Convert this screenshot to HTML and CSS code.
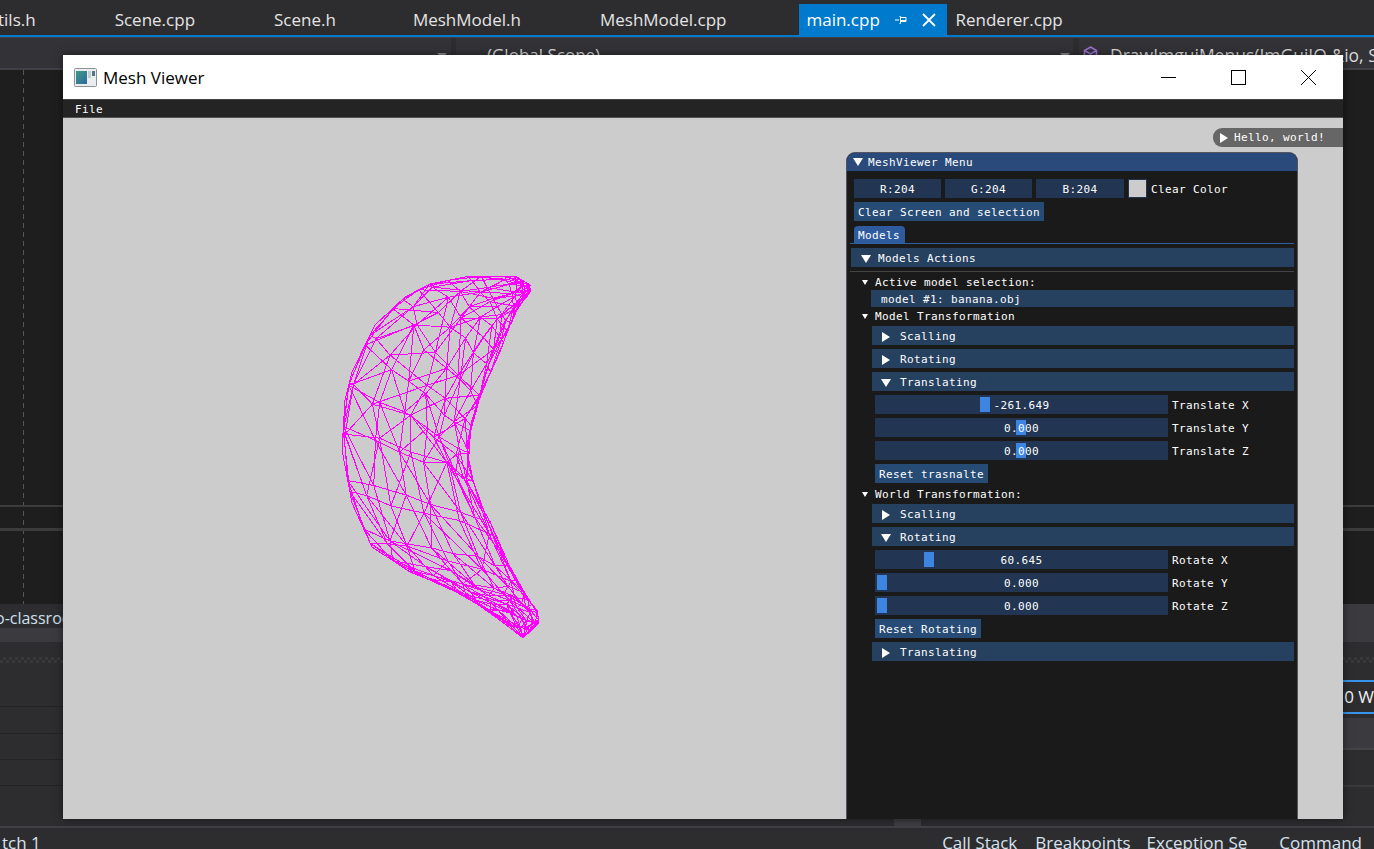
FILE: index.html
```html
<!DOCTYPE html>
<html lang="en">
<head>
    <meta charset="UTF-8">
    <meta name="viewport" content="width=device-width, initial-scale=1.0">
    <title>Mesh Viewer</title>
    <link rel="stylesheet" href="styles.css">
</head>
<body>
    <!-- IDE behind the window -->
    <div class="ide">
        <div class="tabbar">
            <span class="tab first">tils.h</span>
            <span class="tab">Scene.cpp</span>
            <span class="tab">Scene.h</span>
            <span class="tab wide">MeshModel.h</span>
            <span class="tab">MeshModel.cpp</span>
            <span class="tab active">
                main.cpp
                <svg class="pin" width="12" height="10" viewBox="0 0 12 10"><path d="M0 5h4M4.500 1.500h1v7h-1M5 2.500h6v4H5M5 5.500h6" fill="none" stroke="#fff"/></svg>
                <svg class="tab-close" width="14" height="14" viewBox="0 0 14 14"><path d="M1 1l12 12M13 1L1 13" stroke="#fff" stroke-width="1.800"/></svg>
            </span>
            <span class="tab next">Renderer.cpp</span>
        </div>
        <div class="accent"></div>
        <div class="navbar">
            <div class="nav-seg nav-left"><span class="drop"></span></div>
            <div class="nav-seg nav-mid"><span>(Global Scope)</span><span class="drop"></span></div>
            <div class="nav-seg nav-right">
                <svg width="15" height="16" viewBox="0 0 15 16"><path d="M7.500 1l6 3.500v7l-6 3.500-6-3.500v-7zM1.500 4.500l6 3.500 6-3.500M7.500 8v7" fill="#3a2f55" stroke="#9a73c9" stroke-width="1.500"/></svg>
                <span>DrawImguiMenus(ImGuiIO &amp;io, S</span>
            </div>
        </div>
        <div class="editor">
            <div class="editor-main"></div>
            <div class="editor-line"></div>
            <div class="editor-gap"></div>
            <div class="editor-line thick"></div>
            <div class="editor-tail"></div>
        </div>
        <div class="lower">
            <div class="lower-left">
                <div class="panel-tab"><span>o-classroom</span></div>
                <div class="panel-band"></div>
                <div class="dotted"></div>
                <div class="grid-row tall"></div>
                <div class="grid-row tall"></div>
                <div class="grid-row"></div>
                <div class="grid-row"></div>
                <div class="lower-fill"><span class="thumb"></span></div>
            </div>
            <div class="lower-right">
                <div class="panel-band tall"></div>
                <div class="dotted"></div>
                <div class="search-box"><span>0 W</span></div>
                <div class="panel-band mid"></div>
                <div class="grid-row r2"></div>
                <div class="lower-fill"></div>
            </div>
        </div>
        <div class="bottom-tabs">
            <span class="btab">tch 1</span>
            <span class="btab-group">
                <span class="btab">Call Stack</span>
                <span class="btab">Breakpoints</span>
                <span class="btab exc">Exception Se</span>
                <span class="btab cmd">Command</span>
            </span>
        </div>
    </div>

    <!-- Mesh Viewer window -->
    <div class="window">
        <div class="titlebar">
            <svg class="app-icon" width="23" height="19" viewBox="0 0 23 19">
                <defs>
                    <linearGradient id="appFill" x1="0" y1="0" x2="1" y2="1">
                        <stop offset="0" stop-color="#3f9a8a"/>
                        <stop offset="1" stop-color="#2c6a9c"/>
                    </linearGradient>
                </defs>
                <rect x="0.500" y="0.500" width="22" height="18" rx="1" fill="#e9edef" stroke="#8b9296"/>
                <rect x="2" y="3" width="11" height="13" fill="url(#appFill)"/>
                <rect x="14" y="3" width="3" height="7" fill="#c4ccd0"/>
                <rect x="18" y="3" width="3" height="5" fill="#55758a"/>
            </svg>
            <span class="title">Mesh Viewer</span>
            <div class="controls">
                <span class="ctl"><svg width="15" height="15" viewBox="0 0 15 15"><path d="M0 7.500h15" stroke="#000"/></svg></span>
                <span class="ctl"><svg width="15" height="15" viewBox="0 0 15 15"><rect x="0.500" y="0.500" width="14" height="14" fill="none" stroke="#000"/></svg></span>
                <span class="ctl"><svg width="15" height="15" viewBox="0 0 15 15"><path d="M0 0l15 15M15 0L0 15" stroke="#000"/></svg></span>
            </div>
        </div>
        <div class="menubar"><span>File</span></div>
        <div class="canvas">
            <svg class="mesh" id="mesh" width="1280" height="701" viewBox="63 118 1280 701"></svg>

            <div class="hello"><span class="arrow right"></span><span>Hello, world!</span></div>

            <div class="menu">
                <div class="menu-title"><span class="arrow down"></span><span>MeshViewer Menu</span></div>
                <div class="menu-body">
                    <div class="color-row">
                        <span class="frame rgb">R:204</span>
                        <span class="frame rgb">G:204</span>
                        <span class="frame rgb last">B:204</span>
                        <span class="swatch"></span>
                        <span>Clear Color</span>
                    </div>
                    <div class="btn-row"><span class="btn">Clear Screen and selection</span></div>
                    <div class="tabs"><span class="im-tab">Models</span></div>
                    <div class="header top"><span class="arrow down"></span><span>Models Actions</span></div>
                    <div class="separator"></div>
                    <div class="tree first-tree"><span class="arrow small"></span><span>Active model selection:</span></div>
                    <div class="selected">model #1: banana.obj</div>
                    <div class="tree"><span class="arrow small"></span><span>Model Transformation</span></div>

                    <div class="header sub"><span class="arrow right"></span><span>Scalling</span></div>
                    <div class="header sub"><span class="arrow right"></span><span>Rotating</span></div>
                    <div class="header sub"><span class="arrow down"></span><span>Translating</span></div>
                    <div class="slider-row">
                        <div class="slider"><span class="grab" style="left:105px"></span><span class="val">-261.649</span></div>
                        <span>Translate X</span>
                    </div>
                    <div class="slider-row">
                        <div class="slider"><span class="grab" style="left:141px"></span><span class="val">0.000</span></div>
                        <span>Translate Y</span>
                    </div>
                    <div class="slider-row">
                        <div class="slider"><span class="grab" style="left:141px"></span><span class="val">0.000</span></div>
                        <span>Translate Z</span>
                    </div>
                    <div class="btn-row sub"><span class="btn">Reset trasnalte</span></div>

                    <div class="tree world"><span class="arrow small"></span><span>World Transformation:</span></div>
                    <div class="header sub"><span class="arrow right"></span><span>Scalling</span></div>
                    <div class="header sub"><span class="arrow down"></span><span>Rotating</span></div>
                    <div class="slider-row">
                        <div class="slider"><span class="grab" style="left:49px"></span><span class="val">60.645</span></div>
                        <span>Rotate X</span>
                    </div>
                    <div class="slider-row">
                        <div class="slider"><span class="grab" style="left:2px"></span><span class="val">0.000</span></div>
                        <span>Rotate Y</span>
                    </div>
                    <div class="slider-row">
                        <div class="slider"><span class="grab" style="left:2px"></span><span class="val">0.000</span></div>
                        <span>Rotate Z</span>
                    </div>
                    <div class="btn-row sub"><span class="btn">Reset Rotating</span></div>
                    <div class="header sub"><span class="arrow right"></span><span>Translating</span></div>
                </div>
            </div>
        </div>
    </div>

    <script src="mesh.js"></script>
</body>
</html>
```

FILE: styles.css
```css
* {
    box-sizing: border-box;
}
html, body {
    margin: 0;
    height: 100%;
    overflow: hidden;
}
body {
    background-color: #1e1e1e;
    font-family: "Open Sans", "Noto Sans", sans-serif;
    position: relative;
}

/* IDE */
.ide {
    display: flex;
    flex-direction: column;
    height: 849px;
    color: #e8e8e8;
    font-size: 17px;
}
.tabbar {
    display: flex;
    align-items: flex-end;
    height: 35px;
    background-color: #2d2d30;
    white-space: nowrap;
}
.tab {
    margin-left: 79px;
    line-height: 31px;
    height: 31px;
    color: #e4e4e4;
}
.tab.first {
    margin-left: -2px;
}
.tab.wide {
    margin-left: 77px;
}
.tab.active {
    display: flex;
    align-items: center;
    width: 148px;
    margin-left: 73px;
    padding-left: 7px;
    background-color: #007acc;
    color: #fff;
}
.tab.next {
    margin-left: 8px;
}
.pin {
    margin-left: 15px;
}
.tab-close {
    margin-left: 15px;
}
.accent {
    height: 3px;
    background-color: #007acc;
    border-bottom: 1px solid #3f3f46;
}
.navbar {
    display: flex;
    height: 32px;
    background-color: #333337;
    border-bottom: 2px solid #3f3f46;
    font-size: 17px;
    color: #d8d8d8;
}
.nav-seg {
    display: flex;
    align-items: flex-start;
    padding-top: 5px;
    position: relative;
}
.nav-left {
    width: 456px;
    justify-content: flex-end;
    padding-right: 4px;
    border-right: 5px solid #2d2d30;
}
.nav-mid {
    width: 623px;
    padding-left: 31px;
    justify-content: space-between;
    padding-right: 3px;
    border-right: 6px solid #2d2d30;
}
.nav-right {
    flex: 1;
    padding-left: 4px;
    gap: 12px;
    font-size: 17.500px;
    white-space: nowrap;
    overflow: hidden;
}
.nav-right svg {
    flex: none;
    margin-top: 3px;
}
.drop {
    margin-top: 10px;
    border-left: 5px solid transparent;
    border-right: 5px solid transparent;
    border-top: 5px solid #8a8a8a;
}
.editor {
    display: flex;
    flex-direction: column;
    height: 534px;
    background-color: #1e1e1e;
    background-image: repeating-linear-gradient(to bottom, #555 0 5px, transparent 5px 9px);
    background-size: 1px 100%;
    background-position: 23px 0;
    background-repeat: no-repeat;
}
.editor-main {
    height: 435px;
}
.editor-line {
    height: 2px;
    background-color: #3c3c3c;
}
.editor-line.thick {
    height: 3px;
}
.editor-gap {
    height: 21px;
}
.editor-tail {
    flex: 1;
}
.lower {
    display: flex;
    height: 222px;
    background-color: #2d2d30;
}
.lower-left {
    display: flex;
    flex-direction: column;
    width: 932px;
}
.lower-right {
    display: flex;
    flex-direction: column;
    flex: 1;
}
.panel-tab {
    height: 24px;
    padding-top: 2px;
    font-size: 16px;
    line-height: 24px;
    color: #cfe0ee;
    white-space: nowrap;
    overflow: hidden;
    background-color: #2d2d30;
}
.panel-tab span {
    margin-left: -5px;
}
.panel-band {
    height: 14px;
    background-color: #3b3b3f;
}
.panel-band.tall {
    height: 38px;
}
.panel-band.mid {
    height: 32px;
    margin-top: 4px;
    border-bottom: 2px solid #444;
}
.dotted {
    height: 38px;
    background-color: #2d2d30;
    background-image: repeating-conic-gradient(#38383b 0 25%, transparent 0 50%);
    background-size: 6px 6px;
    background-position: 0 15px;
    background-repeat: repeat-x;
}
.grid-row {
    height: 26px;
    border-bottom: 1px solid #232325;
}
.grid-row.tall {
    height: 27px;
}
.grid-row.r2 {
    height: 37px;
    border-bottom: 2px solid #3a3a3d;
}
.lower-fill {
    flex: 1;
    position: relative;
    background-color: #2d2d30;
}
.thumb {
    position: absolute;
    right: 10px;
    bottom: 0;
    width: 27px;
    height: 7px;
    background-color: #3e3e42;
}
.search-box {
    height: 34px;
    padding-left: 413px;
    border-top: 2px solid #3794ea;
    border-bottom: 2px solid #3794ea;
    line-height: 30px;
    color: #f0f0f0;
    white-space: nowrap;
    overflow: hidden;
}
.bottom-tabs {
    display: flex;
    justify-content: space-between;
    height: 23px;
    padding: 3px 12px 0 0;
    background-color: #2d2d30;
    border-top: 2px solid #3f3f46;
    line-height: 24px;
    font-size: 17px;
    color: #d6e2ec;
    white-space: nowrap;
    overflow: hidden;
}
.btab-group {
    display: flex;
    gap: 18px;
}
.bottom-tabs > .btab {
    margin-left: 2px;
}
.btab.exc {
    margin-left: -2px;
}
.btab.cmd {
    margin-left: 14px;
}

/* Mesh Viewer window */
.window {
    position: absolute;
    left: 63px;
    top: 55px;
    width: 1280px;
    height: 764px;
    display: flex;
    flex-direction: column;
    box-shadow: 0 0 8px rgba(0, 0, 0, 0.5);
    overflow: hidden;
}
.titlebar {
    display: flex;
    align-items: center;
    height: 44px;
    flex: none;
    padding-left: 11px;
    background-color: #ffffff;
    color: #000;
    font-size: 17px;
}
.app-icon {
    margin-right: 6px;
}
.controls {
    display: flex;
    margin-left: auto;
}
.ctl {
    display: flex;
    align-items: center;
    justify-content: center;
    width: 70px;
    height: 44px;
}
.menubar,
.canvas {
    font-family: "DejaVu Sans Mono", "Liberation Mono", monospace;
    font-size: 11px;
    letter-spacing: 0.38px;
    color: #fff;
    white-space: nowrap;
}
.menubar {
    flex: none;
    height: 19px;
    padding-left: 12px;
    line-height: 19px;
    background-color: #242424;
    border-top: 1px solid #444;
    border-bottom: 1px solid #555;
}
.canvas {
    position: relative;
    flex: 1;
    background-color: #cccccc;
}
.mesh {
    position: absolute;
    left: 0;
    top: 0;
}
.hello {
    position: absolute;
    left: 1150px;
    top: 10px;
    display: flex;
    align-items: center;
    gap: 6px;
    width: 140px;
    height: 19px;
    padding-left: 7px;
    background-color: #666666;
    border-radius: 9px 0 0 9px;
}

/* imgui triangles */
.arrow {
    display: inline-block;
    flex: none;
}
.arrow.right {
    border-top: 5px solid transparent;
    border-bottom: 5px solid transparent;
    border-left: 8px solid #fff;
}
.arrow.down {
    border-left: 5px solid transparent;
    border-right: 5px solid transparent;
    border-top: 8px solid #fff;
}
.arrow.small {
    border-left: 3px solid transparent;
    border-right: 3px solid transparent;
    border-top: 5px solid #fff;
}

/* imgui menu */
.menu {
    position: absolute;
    left: 783px;
    top: 34px;
    width: 452px;
    height: 700px;
    background-color: #1a1a1a;
    border: 1px solid #55555f;
    border-bottom: none;
    border-radius: 9px 9px 0 0;
}
.menu-title {
    display: flex;
    align-items: center;
    gap: 5px;
    height: 18px;
    padding-left: 6px;
    background-color: #294a7a;
    border-radius: 8px 8px 0 0;
}
.menu-body {
    display: flex;
    flex-direction: column;
    padding: 8px 3px 0 7px;
}
.color-row {
    display: flex;
    gap: 4px;
    height: 19px;
    line-height: 21px;
}
.frame {
    background-color: #223552;
}
.rgb {
    width: 87px;
    height: 19px;
    text-align: center;
}
.rgb.last {
    width: 88px;
}
.swatch {
    width: 19px;
    height: 19px;
    background-color: #cccccc;
    border: 1px solid #24344e;
}
.btn-row {
    display: flex;
    height: 19px;
    margin-top: 4px;
}
.btn-row.sub {
    margin-left: 21px;
}
.btn {
    padding: 0 4px;
    line-height: 21px;
    background-color: #264b74;
}
.tabs {
    display: flex;
    height: 18px;
    margin: 5px 0 0 -4px;
    padding-left: 4px;
    border-bottom: 1px solid #2f5f9f;
}
.im-tab {
    width: 51px;
    height: 17px;
    padding-left: 4px;
    line-height: 19px;
    background-color: #2d5b9e;
    border-radius: 4px 4px 0 0;
}
.header {
    display: flex;
    align-items: center;
    height: 19px;
    margin-top: 4px;
    padding-top: 2px;
    background-color: #26405f;
}
.header.top {
    margin-left: -3px;
    padding-left: 10px;
    gap: 7px;
}
.header.sub {
    margin-left: 18px;
    padding-left: 9px;
    gap: 9px;
}
.header.sub .arrow.right {
    margin: 0 1px;
}
.separator {
    height: 1px;
    margin: 4px 0 0 -4px;
    background-color: #444444;
}
.tree {
    display: flex;
    align-items: center;
    gap: 7px;
    height: 13px;
    margin: 2px 0 0 8px;
    padding-top: 1px;
}
.tree.first-tree {
    margin-top: 3px;
}
.tree.world {
    margin-top: 4px;
}
.selected {
    height: 17px;
    margin: 2px 0 0 17px;
    padding-left: 10px;
    line-height: 19px;
    background-color: #26405f;
}
.slider-row {
    display: flex;
    gap: 4px;
    height: 19px;
    margin: 4px 0 0 21px;
    line-height: 21px;
}
.slider {
    position: relative;
    width: 293px;
    height: 19px;
    text-align: center;
    background-color: #223552;
}
.grab {
    position: absolute;
    top: 2px;
    width: 10px;
    height: 15px;
    background-color: #3d85e0;
}
.val {
    position: relative;
}
```

FILE: mesh.js
```js
// Banana wireframe: two jittered grids (front and back) between the outline curves
const outer = [[530,285],[517,277],[470,276],[430,284],[405,297],[375,325],[352,372],[345,400],[342,450],[352,503],[372,547],[410,572],[450,588],[487,610],[523,638]];
const inner = [[530,293],[517,308],[508,330],[500,352],[480,395],[472,420],[467,445],[468,465],[477,493],[497,547],[517,583],[528,600],[537,610],[539,623],[523,638]];

let seed = 12345;
function rnd() {
    seed = (seed * 16807) % 2147483647;
    return seed / 2147483647;
}

// point at fraction t along a polyline, by index
function along(line, t) {
    const pos = t * (line.length - 1);
    const i = Math.min(Math.floor(pos), line.length - 2);
    const f = pos - i;
    return [
        line[i][0] + (line[i + 1][0] - line[i][0]) * f,
        line[i][1] + (line[i + 1][1] - line[i][1]) * f
    ];
}

function buildLayer(rows, cols, spread) {
    const pts = [];
    for (let i = 0; i <= rows; i++) {
        const t = i / rows;
        const u = 0.5 * t + 0.5 * (1 - Math.cos(Math.PI * t)) / 2;
        const a = along(outer, u);
        const b = along(inner, u);
        const width = Math.hypot(a[0] - b[0], a[1] - b[1]);
        const row = [];
        for (let j = 0; j <= cols; j++) {
            const s = j / cols;
            const v = spread(s);
            const edge = j === 0 || j === cols;
            const jit = edge ? 0 : width / cols * 0.6;
            row.push([
                a[0] + (b[0] - a[0]) * v + (rnd() - 0.5) * jit,
                a[1] + (b[1] - a[1]) * v + (rnd() - 0.5) * jit
            ]);
        }
        pts.push(row);
    }
    return pts;
}

function seg(p, q) {
    return `M${p[0].toFixed(1)} ${p[1].toFixed(1)}L${q[0].toFixed(1)} ${q[1].toFixed(1)}`;
}

function layerPath(pts) {
    let d = '';
    for (let i = 0; i < pts.length; i++) {
        for (let j = 0; j < pts[i].length; j++) {
            if (j + 1 < pts[i].length) d += seg(pts[i][j], pts[i][j + 1]);
            if (i + 1 < pts.length) d += seg(pts[i][j], pts[i + 1][j]);
            if (i + 1 < pts.length && j + 1 < pts[i].length) {
                d += rnd() > 0.5 ? seg(pts[i][j], pts[i + 1][j + 1]) : seg(pts[i][j + 1], pts[i + 1][j]);
            }
        }
    }
    return d;
}

function outline(line) {
    let d = '';
    for (let i = 0; i + 1 < line.length; i++) d += seg(line[i], line[i + 1]);
    return d;
}

const front = buildLayer(17, 7, s => Math.sin(Math.PI / 2 * s));
const back = buildLayer(15, 6, s => (1 - Math.cos(Math.PI * s)) / 2);

const path = document.createElementNS('http://www.w3.org/2000/svg', 'path');
path.setAttribute('d', layerPath(front) + layerPath(back) + outline(outer) + outline(inner));
path.setAttribute('fill', 'none');
path.setAttribute('stroke', '#ff00ff');
path.setAttribute('stroke-width', '1');
path.setAttribute('shape-rendering', 'crispEdges');
document.getElementById('mesh').appendChild(path);
```
